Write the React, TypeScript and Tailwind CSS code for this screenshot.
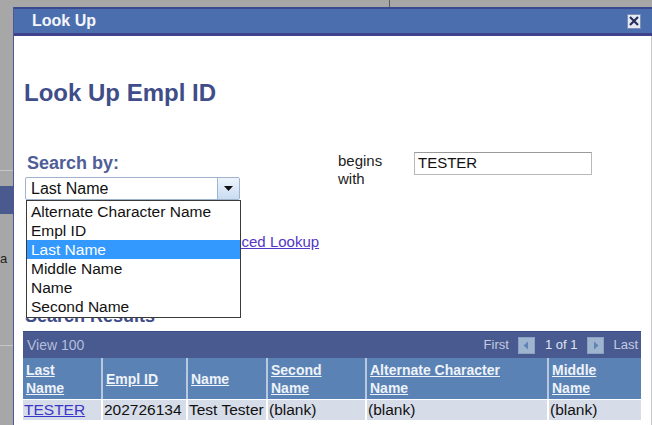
import React from "react";

const SEARCH_FIELDS = [
  "Alternate Character Name",
  "Empl ID",
  "Last Name",
  "Middle Name",
  "Name",
  "Second Name",
];

const COLUMNS: { label: React.ReactNode; width: string }[] = [
  { label: <>Last<br />Name</>, width: "w-[78px]" },
  { label: "Empl ID", width: "w-[85px]" },
  { label: "Name", width: "w-[80px]" },
  { label: <>Second<br />Name</>, width: "w-[99px]" },
  { label: <>Alternate Character<br />Name</>, width: "w-[182px]" },
  { label: <>Middle<br />Name</>, width: "w-[94px]" },
];

const ROW = ["TESTER", "202726134", "Test Tester", "(blank)", "(blank)", "(blank)"];

function PagerButton({ dir }: { dir: "prev" | "next" }) {
  return (
    <span className="flex h-[17px] w-[17px] items-center justify-center bg-[#9fb5cf] border border-[#8aa3c2]">
      <svg width="6" height="9" viewBox="0 0 6 9">
        {dir === "prev" ? (
          <path d="M5 0.5 L0.5 4.5 L5 8.5 Z" fill="#5d85b6" />
        ) : (
          <path d="M1 0.5 L5.5 4.5 L1 8.5 Z" fill="#5d85b6" />
        )}
      </svg>
    </span>
  );
}

function SearchSelect() {
  return (
    <div className="flex h-[23px] w-[215px] items-stretch rounded-[2px] border border-[#9fb3cc] bg-white">
      <span className="flex flex-1 items-center pl-[5px] text-[16px] leading-none text-[#111]">
        Last Name
      </span>
      <span className="flex w-[22px] items-center justify-center border-l border-[#9cb6d8] bg-gradient-to-b from-[#eef4fb] to-[#c9dcf1]">
        <svg width="9" height="5" viewBox="0 0 9 5">
          <path d="M0 0 H9 L4.5 5 Z" fill="#111" />
        </svg>
      </span>
    </div>
  );
}

// open list of the "Search by" select, drawn over the page
function FieldList() {
  return (
    <ul className="absolute left-[12px] top-[164px] w-[215px] border border-[#3a3a3a] bg-white py-px">
      {SEARCH_FIELDS.map((f) => (
        <li
          key={f}
          className={
            "flex h-[19px] items-center pl-[4px] text-[15.5px] leading-none " +
            (f === "Last Name" ? "bg-[#3399ff] text-white" : "text-[#111]")
          }
        >
          {f}
        </li>
      ))}
    </ul>
  );
}

function ResultsGrid() {
  return (
    <div className="w-[618px] overflow-hidden">
      <div className="flex h-[27px] items-center border-t border-[#3c4c84] bg-[#485a8f] pl-[4px] text-[14px] text-[#b4bfdc]">
        <span>View 100</span>
        <div className="ml-auto flex items-center text-[13px] text-[#c3cbe0]">
          <span>First</span>
          <span className="ml-[9px]"><PagerButton dir="prev" /></span>
          <span className="ml-[10px] text-[#dfe5f2]">1 of 1</span>
          <span className="ml-[10px]"><PagerButton dir="next" /></span>
          <span className="ml-[9px] mr-[3px]">Last</span>
        </div>
      </div>
      <div className="flex h-[41px] bg-[#5b82b5]">
        {COLUMNS.map((c, i) => (
          <div
            key={i}
            className={
              c.width +
              " flex shrink-0 items-center pl-[3px] text-[14px] font-bold leading-[18px] text-[#eef2f9] underline " +
              (i > 0 ? "border-l-2 border-[#b9c8de]" : "")
            }
          >
            <span>{c.label}</span>
          </div>
        ))}
      </div>
      <div className="flex h-[21px] border-t border-white bg-[#d6dce8]">
        {ROW.map((v, i) => (
          <div
            key={i}
            className={
              COLUMNS[i].width +
              " flex shrink-0 items-center pl-px text-[15.5px] leading-none text-[#111] " +
              (i > 0 ? "border-l-2 border-white" : "")
            }
          >
            {i === 0 ? (
              <span className="text-[#3a36c9] underline">{v}</span>
            ) : (
              <span>{v}</span>
            )}
          </div>
        ))}
      </div>
    </div>
  );
}

export default function App() {
  return (
    <div
      className="flex h-[425px] w-[652px] flex-col overflow-hidden bg-[#a7a7a7]"
      style={{ fontFamily: '"Liberation Sans", Arial, sans-serif' }}
    >
      {/* page behind the dialog */}
      <div className="flex h-[7px] shrink-0">
        <div className="w-[389px]" />
        <div className="w-px bg-[#5e5e5e]" />
      </div>

      <div className="flex flex-1">
        <div className="flex w-[13px] shrink-0 flex-col">
          <div className="h-[163px]" />
          <div className="h-px bg-[#c6c6c6]" />
          <div className="h-[15px]" />
          <div className="h-[28px] bg-[#4b5a8e]" />
          <div className="h-[38px]" />
          <div className="text-[13px] leading-[14px] text-[#222]">a</div>
          <div className="h-[79px]" />
          <div className="h-px bg-[#c6c6c6]" />
        </div>

        {/* Look Up dialog */}
        <div className="flex flex-1 flex-col border-l border-[#4c5794] bg-white">
          <div className="flex h-[29px] shrink-0 items-center border-t-2 border-b-[3px] border-t-[#3a4a8e] border-b-[#40418d] bg-[#4b6fae] pl-[18px] pr-[11px]">
            <span className="text-[16px] font-bold leading-none text-[#f4f6fb]">Look Up</span>
            <span className="ml-auto flex h-[15px] w-[14px] items-center justify-center border border-[#7e8fb6] bg-[#e4e9f2]">
              <svg width="10" height="10" viewBox="0 0 10 10">
                <path d="M1 1 L9 9 M9 1 L1 9" stroke="#26305e" strokeWidth="2.2" />
              </svg>
            </span>
          </div>

          <div className="relative flex flex-1 flex-col border-r border-[#c9c9c9] pl-[9px]">
            <h1 className="ml-px mt-[43px] text-[24px] font-bold leading-[28px] text-[#3f4d88]">
              Look Up Empl ID
            </h1>

            <div className="mt-[45px] flex h-[48px] items-start">
              <div className="ml-[2px] w-[313px] pt-px">
                <div className="ml-[2px] text-[18px] font-bold leading-[21px] text-[#4f5e97]">
                  Search by:
                </div>
                <div className="mt-[3px]">
                  <SearchSelect />
                </div>
              </div>
              <div className="w-[76px] text-[15px] leading-[18px] text-[#222]">
                begins
                <br />
                with
              </div>
              <div className="flex h-[23px] w-[178px] items-center border border-[#b9b9b9] border-t-[#9a9a9a] pl-[3px] text-[15px] text-[#111]">
                TESTER
              </div>
            </div>

            <div className="mt-[33px] flex h-[18px] items-center pl-[176px] text-[15px] leading-[18px]">
              <span className="text-[#5236c4] underline">Advanced Lookup</span>
            </div>

            <h2 className="ml-[2px] mt-[55px] text-[18px] font-bold leading-[21px] text-[#3f4d88]">
              Search Results
            </h2>

            <div className="mt-[4px]">
              <ResultsGrid />
            </div>

            <FieldList />
          </div>
        </div>
      </div>
    </div>
  );
}
